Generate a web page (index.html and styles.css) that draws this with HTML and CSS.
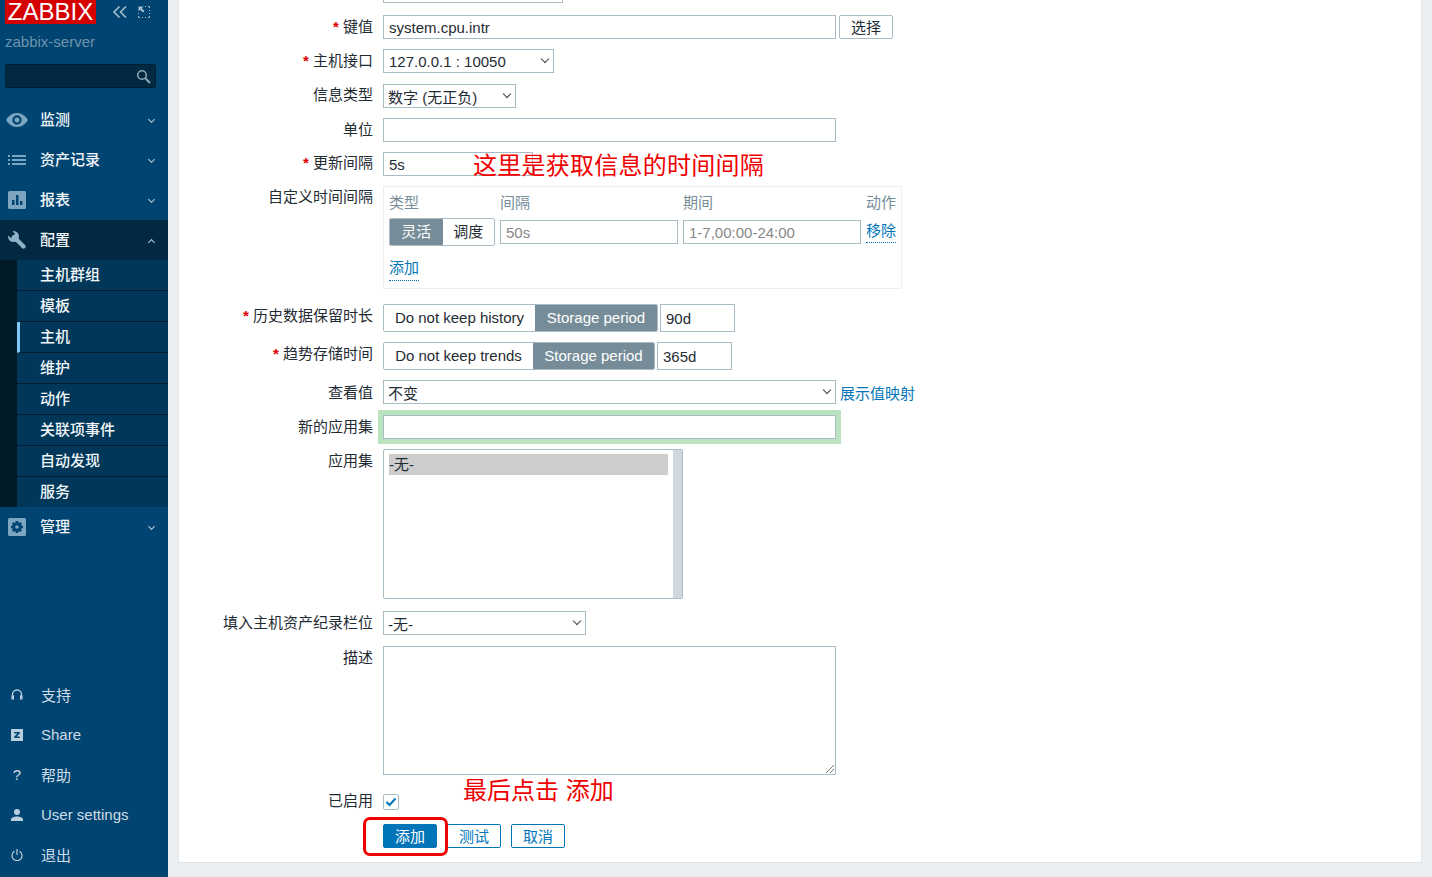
FILE: index.html
```html
<!DOCTYPE html>
<html>
<head>
    <title>Zabbix</title>
    <link rel="stylesheet" href="styles.css">
</head>
<body>
    <div class="sidebar">
        <div class="logo-row">
            <div class="logo">ZABBIX</div>
            <svg class="top-icon" width="16" height="14" viewBox="0 0 16 14"><path d="M7.500 1.500 2 7l5.500 5.500M14 1.500 8.500 7l5.500 5.500" fill="none" stroke="#a5c0d2" stroke-width="1.600"/></svg>
            <svg class="top-icon" width="12" height="12" viewBox="0 0 12 12"><path d="M7 .5h1M10 .5h1.500V2M11.500 4v1M11.500 7v1M11.500 10v1.500H10M8 11.500H7M5 11.500H4M2 11.500H.5V10M.5 8V7" fill="none" stroke="#a5c0d2"/><path d="M.5.500h5L3.800 2.200 6.500 5 5 6.500 2.200 3.800.5 5.500z" fill="#a5c0d2"/></svg>
        </div>
        <div class="server">zabbix-server</div>
        <div class="search">
            <svg width="15" height="15" viewBox="0 0 15 15"><circle cx="6" cy="6" r="4.300" fill="none" stroke="#8fa9ba" stroke-width="1.500"/><path d="m9.300 9.300 4.700 4.700" stroke="#8fa9ba" stroke-width="2"/></svg>
        </div>
        <div class="nav">
            <div class="nav-item">
                <svg class="nav-icon eye" width="22" height="14" viewBox="0 0 22 14"><path fill-rule="evenodd" d="M11 0c5 0 9 3.500 11 7-2 3.500-6 7-11 7S2 10.500 0 7c2-3.500 6-7 11-7zm0 2.300A4.700 4.700 0 1 0 11 11.700 4.700 4.700 0 0 0 11 2.300zM11 4.500a2.500 2.500 0 1 1 0 5 2.500 2.500 0 0 1 0-5z" fill="#7fa6c0"/></svg>
                <span>监测</span><i class="chev"></i>
            </div>
            <div class="nav-item">
                <svg class="nav-icon" width="18" height="12" viewBox="0 0 18 12"><path d="M0 1h2v2H0zM4 1h14v2H4zM0 5h2v2H0zM4 5h14v2H4zM0 9h2v2H0zM4 9h14v2H4z" fill="#7fa6c0"/></svg>
                <span>资产记录</span><i class="chev"></i>
            </div>
            <div class="nav-item">
                <svg class="nav-icon" width="18" height="18" viewBox="0 0 18 18"><rect width="18" height="18" rx="1.500" fill="#7fa6c0"/><path d="M4 9h2.500v5H4zM8 4h2.500v10H8zM12 10h2.500v4H12z" fill="#004472"/></svg>
                <span>报表</span><i class="chev"></i>
            </div>
            <div class="nav-item active">
                <svg class="nav-icon" width="18" height="18" viewBox="0 0 18 18"><circle cx="5.500" cy="5.500" r="5.500" fill="#8fb1c8"/><path d="M3.500-1-1 3.500 3 7 7 3z" fill="#012a42"/><path d="M6 6l9.500 9.500" stroke="#8fb1c8" stroke-width="4.200" stroke-linecap="round"/></svg>
                <span>配置</span><i class="chev up"></i>
            </div>
            <div class="sub">
                <div class="sub-item">主机群组</div>
                <div class="sub-item">模板</div>
                <div class="sub-item selected">主机</div>
                <div class="sub-item">维护</div>
                <div class="sub-item">动作</div>
                <div class="sub-item">关联项事件</div>
                <div class="sub-item">自动发现</div>
                <div class="sub-item last">服务</div>
            </div>
            <div class="nav-item">
                <svg class="nav-icon" width="18" height="18" viewBox="0 0 18 18"><rect width="18" height="18" rx="1.500" fill="#7fa6c0"/><path d="M9 3v12M3 9h12M4.800 4.800l8.400 8.400M13.200 4.800l-8.400 8.400" stroke="#004472" stroke-width="2.600"/><circle cx="9" cy="9" r="4.800" fill="#004472"/><circle cx="9" cy="9" r="1.800" fill="#7fa6c0"/></svg>
                <span>管理</span><i class="chev"></i>
            </div>
        </div>
        <div class="bottom-nav">
            <div class="bottom-item">
                <svg width="12" height="12" viewBox="0 0 12 12"><path d="M1.500 8V5.500a4.500 4.500 0 0 1 9 0V8" fill="none" stroke="#b9cfdd" stroke-width="1.300"/><path d="M.5 6.500h2.500v4H.5zM9 6.500h2.500v4H9z" fill="#b9cfdd"/></svg>
                <span>支持</span>
            </div>
            <div class="bottom-item">
                <svg width="12" height="12" viewBox="0 0 12 12"><rect width="12" height="12" fill="#b9cfdd"/><path d="M3.300 3h5.400v1.500L5.500 7.600h3.200V9H3.300V7.600l3.200-3.100H3.300z" fill="#004472"/></svg>
                <span>Share</span>
            </div>
            <div class="bottom-item">
                <b class="qmark">?</b>
                <span>帮助</span>
            </div>
            <div class="bottom-item">
                <svg width="12" height="12" viewBox="0 0 12 12"><circle cx="6" cy="3" r="3" fill="#b9cfdd"/><path d="M0 12V10.500C0 8.500 3 7.500 6 7.500s6 1 6 3V12z" fill="#b9cfdd"/></svg>
                <span>User settings</span>
            </div>
            <div class="bottom-item">
                <svg width="12" height="12" viewBox="0 0 12 12"><path d="M3.500 2.300a5 5 0 1 0 5 0" fill="none" stroke="#b9cfdd" stroke-width="1.200"/><path d="M6 0v6" stroke="#b9cfdd" stroke-width="1.200"/></svg>
                <span>退出</span>
            </div>
        </div>
    </div>

    <div class="main">
        <div class="card">
            <div class="row r-first">
                <label></label>
                <div class="select w180 low">Zabbix 客户端<i class="arrow"></i></div>
            </div>
            <div class="row r-key">
                <label><em>*</em> 键值</label>
                <div class="ctrl">
                    <div class="input w453">system.cpu.intr</div>
                    <div class="btn-gray">选择</div>
                </div>
            </div>
            <div class="row r-iface">
                <label><em>*</em> 主机接口</label>
                <div class="select w171">127.0.0.1 : 10050<i class="arrow"></i></div>
            </div>
            <div class="row r-type">
                <label>信息类型</label>
                <div class="select w133 low">数字 (无正负)<i class="arrow"></i></div>
            </div>
            <div class="row r-unit">
                <label>单位</label>
                <div class="input w453"></div>
            </div>
            <div class="row r-update">
                <label><em>*</em> 更新间隔</label>
                <div class="input w150">5s</div>
            </div>
            <div class="row r-custom">
                <label>自定义时间间隔</label>
                <div class="intervals">
                    <div class="iv-head">
                        <span>类型</span><span>间隔</span><span>期间</span><span class="iv-act">动作</span>
                    </div>
                    <div class="iv-row">
                        <div class="toggle">
                            <div class="tog on">灵活</div><div class="tog">调度</div>
                        </div>
                        <div class="input iv-input ph">50s</div>
                        <div class="input iv-input ph">1-7,00:00-24:00</div>
                        <a class="link iv-act">移除</a>
                    </div>
                    <a class="link add">添加</a>
                </div>
            </div>
            <div class="row r-history">
                <label><em>*</em> 历史数据保留时长</label>
                <div class="ctrl tight">
                    <div class="toggle tall">
                        <div class="tog t-hist">Do not keep history</div><div class="tog on t-store">Storage period</div>
                    </div>
                    <div class="input tall-in w75">90d</div>
                </div>
            </div>
            <div class="row r-trends">
                <label><em>*</em> 趋势存储时间</label>
                <div class="ctrl tight">
                    <div class="toggle tall">
                        <div class="tog t-trend">Do not keep trends</div><div class="tog on t-store-b">Storage period</div>
                    </div>
                    <div class="input tall-in w75">365d</div>
                </div>
            </div>
            <div class="row r-view">
                <label>查看值</label>
                <div class="ctrl small-gap">
                    <div class="select w453 low">不变<i class="arrow"></i></div>
                    <a class="link plain">展示值映射</a>
                </div>
            </div>
            <div class="row r-newapp">
                <label>新的应用集</label>
                <div class="input w453 glow"></div>
            </div>
            <div class="row r-apps">
                <label>应用集</label>
                <div class="listbox">
                    <div class="list-body"><div class="list-opt">-无-</div></div>
                    <div class="list-bar"></div>
                </div>
            </div>
            <div class="row r-inv">
                <label>填入主机资产纪录栏位</label>
                <div class="select w203 low">-无-<i class="arrow"></i></div>
            </div>
            <div class="row r-desc">
                <label>描述</label>
                <div class="textarea">
                    <svg class="grip" width="8" height="8" viewBox="0 0 8 8"><path d="M0 8 8 0M4 8l4-4" stroke="#777" fill="none"/></svg>
                </div>
            </div>
            <div class="row r-enabled">
                <label>已启用</label>
                <div class="check">
                    <svg width="12" height="10" viewBox="0 0 12 10"><path d="M1.500 5 4.500 8l6-6.500" fill="none" stroke="#0275b8" stroke-width="2"/></svg>
                </div>
            </div>
            <div class="row r-buttons">
                <label></label>
                <div class="ctrl btns">
                    <div class="btn primary">添加</div>
                    <div class="btn">测试</div>
                    <div class="btn">取消</div>
                </div>
            </div>
        </div>
    </div>

    <!-- marks drawn on top of the screenshot -->
    <div class="note note-interval">这里是获取信息的时间间隔</div>
    <div class="note note-add">最后点击 添加</div>
    <div class="note-box"></div>
</body>
</html>
```

FILE: styles.css
```css
* { box-sizing: border-box; }
html, body { height: 100%; }
body {
    margin: 0;
    display: flex;
    height: 877px;
    overflow: hidden;
    background: #ebeef0;
    font-family: "Liberation Sans", "Noto Sans CJK SC", sans-serif;
    font-size: 15px;
    color: #1f2c33;
}

/* sidebar */
.sidebar {
    width: 168px;
    flex: none;
    height: 877px;
    background: #004472;
    display: flex;
    flex-direction: column;
    color: #f2f6f8;
}
.logo-row { display: flex; align-items: center; height: 24px; padding-left: 5px; }
.logo {
    width: 91px;
    height: 24px;
    background: #d40000;
    color: #fff;
    font-size: 24px;
    line-height: 24px;
    text-align: center;
    margin-right: 16px;
}
.top-icon { flex: none; margin-right: 10px; }
.server { margin: 9px 0 0 5px; height: 17px; line-height: 17px; color: #6f93ab; }
.search {
    margin: 14px 12px 0 5px;
    height: 24px;
    background: #012a42;
    border: 1px solid #001e30;
    border-radius: 2px;
    display: flex;
    align-items: center;
    justify-content: flex-end;
    padding-right: 4px;
}
.nav { margin-top: 12px; }
.nav-item {
    height: 40px;
    display: flex;
    align-items: center;
    position: relative;
    font-weight: 500;
    padding: 0 0 4px 40px;
}
.nav-icon { position: absolute; left: 8px; top: 50%; transform: translateY(-50%); }
.nav-icon.eye { left: 6px; }
.nav-item.active { background: #012a42; }
.chev {
    position: absolute;
    right: 14px;
    top: 17px;
    width: 5px;
    height: 5px;
    border-right: 1px solid #b9cfdd;
    border-bottom: 1px solid #b9cfdd;
    transform: rotate(45deg);
}
.chev.up { top: 20px; transform: rotate(225deg); }
.sub { background: #001a28; padding-left: 17px; }
.sub-item {
    height: 31px;
    line-height: 30px;
    padding-left: 23px;
    background: #01385a;
    border-bottom: 1px solid #001e30;
    color: #f2f6f8;
    font-weight: 500;
}
.sub-item.last { border-bottom: none; height: 30px; }
.sub-item.selected { border-left: 3px solid #7fc9f5; padding-left: 20px; }
.bottom-nav { margin-top: auto; padding-bottom: 2px; }
.bottom-item {
    height: 40px;
    display: flex;
    align-items: center;
    padding: 0 0 1px 11px;
    color: #cfdde7;
}
.bottom-item span { margin-left: 18px; }
.qmark { width: 12px; text-align: center; font-weight: normal; color: #cfdde7; }

/* main form */
.main { flex: 1; padding: 0 10px 14px 10px; min-width: 0; }
.card {
    height: 884px;
    margin-top: -21px;
    background: #fff;
    border: 1px solid #e0e4e6;
    border-top: none;
}
.row {
    display: grid;
    grid-template-columns: 194px 1fr;
    column-gap: 10px;
    align-items: start;
}
.row label {
    text-align: right;
    line-height: 20px;
    color: #1f2c33;
}
.row label em { color: #e00000; font-style: normal; font-weight: bold; }
.ctrl { display: flex; gap: 3px; align-items: flex-start; }
.input, .select, .textarea {
    height: 24px;
    border: 1px solid #a9bbc5;
    background: #fff;
    padding-left: 5px;
    line-height: 24px;
    color: #1f2c33;
    position: relative;
}
.select.low { line-height: 26px; padding-left: 4px; }
.w150 { width: 150px; }
.w171 { width: 171px; }
.w133 { width: 133px; }
.w180 { width: 180px; }
.w203 { width: 203px; }
.w453 { width: 453px; }
.w75 { width: 75px; }
.arrow {
    position: absolute;
    right: 5px;
    top: 6px;
    width: 6px;
    height: 6px;
    border-right: 1px solid #444;
    border-bottom: 1px solid #444;
    transform: rotate(45deg);
}
.btn-gray {
    height: 24px;
    width: 54px;
    border: 1px solid #a9bbc5;
    text-align: center;
    line-height: 23px;
    border-radius: 2px;
}
.r-first { height: 36px; }
.r-key { height: 34px; }
.r-key label, .r-iface label, .r-unit label { margin-top: 2px; }
.r-type label, .r-update label { margin-top: 1px; }
.r-iface { height: 35px; }
.r-type { height: 34px; }
.r-unit { height: 34px; }
.r-update { height: 34px; }
.r-custom { height: 118px; }
.r-custom label { margin-top: 1px; }
.intervals {
    width: 519px;
    height: 103px;
    border: 1px solid #eceff1;
    padding: 5px;
}
.iv-head {
    display: grid;
    grid-template-columns: 111px 183px 183px 1fr;
    height: 23px;
    line-height: 22px;
    color: #768d99;
}
.iv-act { text-align: right; }
.iv-row {
    display: grid;
    grid-template-columns: 106px 178px 178px 1fr;
    column-gap: 5px;
    align-items: start;
    height: 41px;
    margin-top: 3px;
}
.toggle {
    display: flex;
    border: 1px solid #a9bbc5;
    border-radius: 2px;
    height: 28px;
    overflow: hidden;
}
.tog { line-height: 26px; text-align: center; width: 52px; }
.tog.on { background: #768d99; color: #fff; width: 53px; }
.iv-input { margin-top: 2px; }
.ph { color: #888; }
.link { color: #0275b8; }
.iv-row .link, .add { border-bottom: 1px dotted #0275b8; height: 25px; line-height: 26px; }
.iv-row .link { justify-self: end; }
.add { display: inline-block; height: 22px; line-height: 18px; margin-top: -3px; }
.r-history { height: 38px; }
.r-trends { height: 38px; }
.r-history label, .r-trends label { margin-top: 2px; }
.tog.t-hist { width: 151px; }
.tog.t-trend { width: 149px; }
.tog.t-store { width: 122px; }
.tog.t-store-b { width: 121px; }
.tight { gap: 2px; }
.tall-in { height: 28px; line-height: 28px; }
.r-view { height: 35px; }
.r-view label { margin-top: 3px; }
.small-gap { gap: 4px; }
.plain { line-height: 28px; }
.r-newapp { height: 34px; }
.r-newapp label, .r-apps label, .r-inv label, .r-desc label { margin-top: 2px; }
.glow { box-shadow: 0 0 0 5px #bbe3c0; }
.r-apps { height: 162px; }
.listbox {
    width: 300px;
    height: 150px;
    border: 1px solid #a9bbc5;
    border-radius: 2px;
    display: flex;
}
.list-body { flex: 1; padding: 4px 5px; }
.list-opt { background: #cdcdcd; height: 21px; line-height: 21px; color: #1f2c33; }
.list-bar { width: 9px; background: #cfd8de; }
.r-inv { height: 35px; }
.textarea { width: 453px; height: 129px; }
.grip { position: absolute; right: 1px; bottom: 1px; }
.r-desc { height: 148px; }
.r-enabled { height: 30px; }
.r-enabled label { margin-top: -3px; }
.check {
    width: 16px;
    height: 16px;
    border: 1px solid #a9bbc5;
    border-radius: 2px;
    display: flex;
    align-items: center;
    justify-content: center;
}
.btns { gap: 10px; }
.btn {
    width: 54px;
    height: 24px;
    border: 1px solid #0275b8;
    border-radius: 2px;
    color: #0275b8;
    text-align: center;
    line-height: 23px;
}
.btn.primary { background: #0275b8; color: #fff; }

/* red annotations */
.note { position: absolute; color: #f00000; font-size: 24px; line-height: 30px; white-space: nowrap; }
.note-interval { left: 473px; top: 151px; letter-spacing: .25px; }
.note-add { left: 463px; top: 776px; }
.note-box {
    position: absolute;
    left: 363px;
    top: 817px;
    width: 85px;
    height: 39px;
    border: 3px solid #f00000;
    border-radius: 7px;
}
```
